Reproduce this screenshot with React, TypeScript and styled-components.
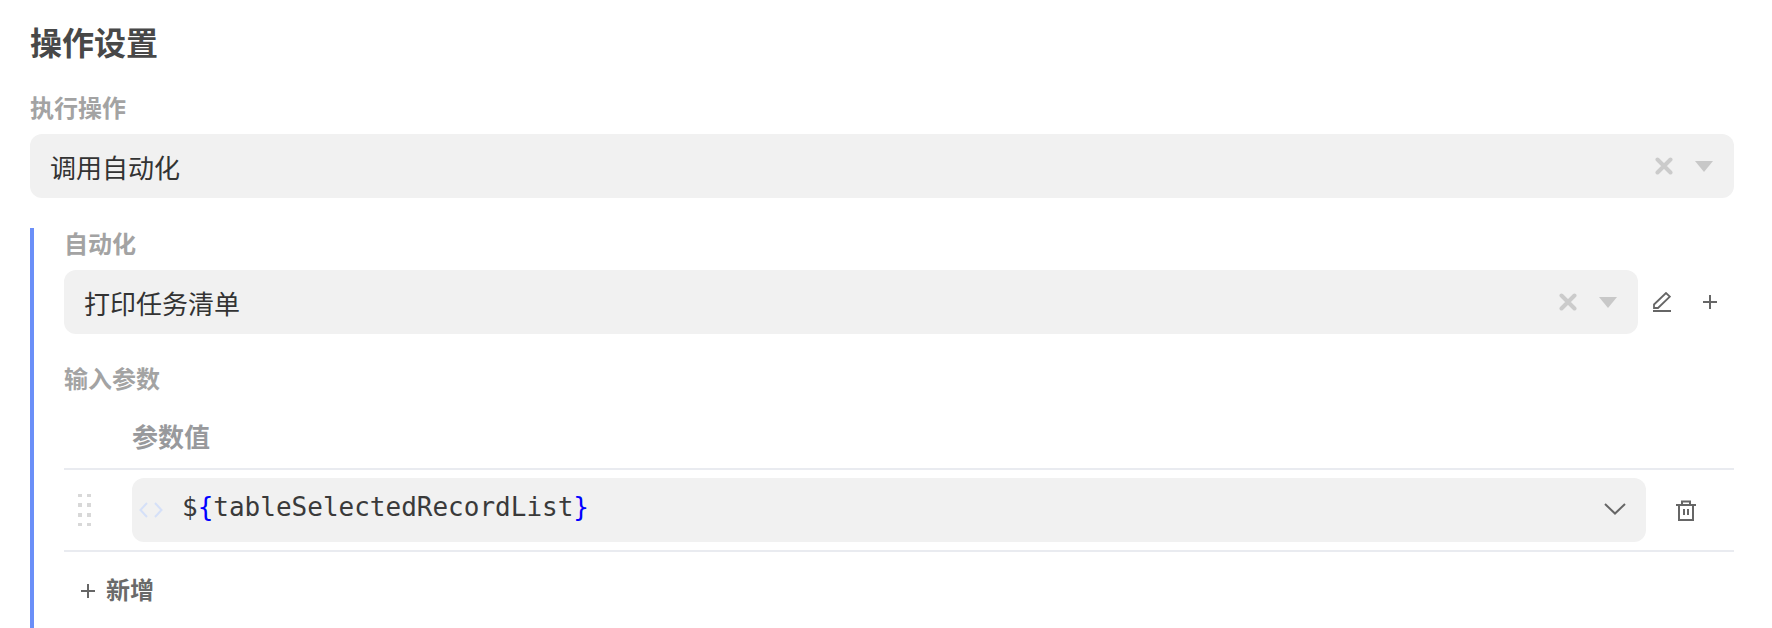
import React from "react";
import styled, { createGlobalStyle } from "styled-components";

const Global = createGlobalStyle`
  html, body { margin: 0; padding: 0; background: #fff; }
  body { font-family: "Liberation Sans", "Noto Sans CJK SC", sans-serif; overflow: hidden; }
`;

const Page = styled.div`
  width: 1772px;
  height: 628px;
  box-sizing: border-box;
  padding: 22px 38px 0 30px;
  overflow: hidden;
`;

const Title = styled.h1`
  margin: 0 0 26px;
  font-size: 32px;
  line-height: 44px;
  font-weight: 700;
  color: #484848;
`;

const Label = styled.div`
  font-size: 24px;
  line-height: 34px;
  font-weight: 700;
  color: #a3a3a3;
  margin-bottom: 8px;
`;

const Select = styled.div`
  flex: 1;
  min-width: 0;
  height: 64px;
  box-sizing: border-box;
  border-radius: 12px;
  background: #f1f1f1;
  display: flex;
  align-items: center;
  padding: 0 21px 0 20px;
  font-size: 26px;
  color: #333;
`;

const SelectText = styled.span`
  flex: 1;
`;

const ClearIcon = styled.svg`
  width: 18px;
  height: 18px;
  margin-right: 22px;
  display: block;
`;

const CaretIcon = styled.svg`
  width: 18px;
  height: 11px;
  display: block;
`;

const Branch = styled.section`
  margin-top: 30px;
  border-left: 4px solid #6b8ff8;
  padding-left: 30px;
  height: 400px;
`;

const SubField = styled.div`
  margin-bottom: 29px;
`;

const SelectRow = styled.div`
  display: flex;
  align-items: center;
`;

const IconSlot = styled.div`
  width: 48px;
  display: flex;
  justify-content: center;
  align-items: center;
  color: #666;
  flex: none;
`;

const TableHead = styled.div`
  padding: 0 0 9px 68px;
  height: 42px;
  margin-top: 20px;
  font-size: 26px;
  line-height: 42px;
  font-weight: 700;
  color: #98999c;
  border-bottom: 2px solid #e9ebf0;
`;

const TableRow = styled.div`
  display: flex;
  align-items: flex-start;
  height: 82px;
  padding-top: 8px;
  box-sizing: border-box;
  border-bottom: 2px solid #e9ebf0;
`;

const Handle = styled.div`
  width: 68px;
  flex: none;
  height: 64px;
  display: flex;
  align-items: center;
  padding-left: 14px;
  box-sizing: border-box;
`;

const HandleDots = styled.svg`
  display: block;
  width: 13px;
  height: 33px;
`;

const ValueInput = styled.div`
  width: 1514px;
  height: 64px;
  flex: none;
  box-sizing: border-box;
  border-radius: 12px;
  background: #f1f1f1;
  display: flex;
  align-items: center;
  padding: 0 20px 0 7px;
`;

const CodeIcon = styled.svg`
  width: 24px;
  height: 18px;
  flex: none;
  margin-right: 19px;
`;

const Code = styled.span`
  flex: 1;
  padding-bottom: 6px;
  font-family: "DejaVu Sans Mono", monospace;
  font-size: 26px;
  color: #3a3a3a;
  white-space: pre;
`;

const Brace = styled.span`
  color: #0000ff;
`;

const Trash = styled.div`
  width: 80px;
  height: 64px;
  flex: none;
  display: flex;
  justify-content: center;
  align-items: center;
  color: #666;
`;

const AddButton = styled.div`
  display: flex;
  align-items: center;
  gap: 11px;
  margin-top: 22px;
  padding-left: 17px;
  font-size: 24px;
  line-height: 34px;
  font-weight: 700;
  color: #6a6a6a;
`;

const Clear = () => (
  <ClearIcon viewBox="0 0 18 18">
    <path d="M2.5 2.5L15.5 15.5M15.5 2.5L2.5 15.5" stroke="#cbcbcb" strokeWidth="4" strokeLinecap="round" />
  </ClearIcon>
);

const Caret = () => (
  <CaretIcon viewBox="0 0 18 11">
    <path d="M0 0H18L9 11Z" fill="#c8c8c8" />
  </CaretIcon>
);

const Plus = () => (
  <svg width="14" height="14" viewBox="0 0 14 14" style={{ display: "block" }}>
    <path d="M7 0V14M0 7H14" stroke="#666" strokeWidth="2" />
  </svg>
);

export default function App() {
  return (
    <Page>
      <Global />
      <Title>操作设置</Title>
      <Label>执行操作</Label>
      <Select>
        <SelectText>调用自动化</SelectText>
        <Clear />
        <Caret />
      </Select>
      <Branch>
        <SubField>
          <Label>自动化</Label>
          <SelectRow>
            <Select>
              <SelectText>打印任务清单</SelectText>
              <Clear />
              <Caret />
            </Select>
            <IconSlot>
              <svg width="18" height="20" viewBox="0 0 18 20" fill="none" stroke="#666" style={{ display: "block" }}>
                <path d="M1 12.5L13 1L16.8 4.6L5 16H1Z" strokeWidth="1.8" />
                <path d="M0 19H18" strokeWidth="2" />
              </svg>
            </IconSlot>
            <IconSlot>
              <Plus />
            </IconSlot>
          </SelectRow>
        </SubField>
        <Label>输入参数</Label>
        <TableHead>参数值</TableHead>
        <TableRow>
          <Handle>
            <HandleDots viewBox="0 0 13 33" fill="#d8d8d8">
              <rect x="0" y="0" width="4" height="3" /><rect x="9" y="0" width="4" height="3" />
              <rect x="0" y="9" width="4" height="4" /><rect x="9" y="9" width="4" height="4" />
              <rect x="0" y="19" width="4" height="4" /><rect x="9" y="19" width="4" height="4" />
              <rect x="0" y="29" width="4" height="3" /><rect x="9" y="29" width="4" height="3" />
            </HandleDots>
          </Handle>
          <ValueInput>
            <CodeIcon viewBox="0 0 24 18" fill="none" stroke="#d5e0f8" strokeWidth="2">
              <path d="M8 2L1.5 9L8 16M16 2L22.5 9L16 16" />
            </CodeIcon>
            <Code>$<Brace>{"{"}</Brace>tableSelectedRecordList<Brace>{"}"}</Brace></Code>
            <svg width="22" height="12" viewBox="0 0 22 12" fill="none" stroke="#666" strokeWidth="2" style={{ display: "block", marginTop: "-2px" }}>
              <path d="M1 1L11 10.5L21 1" />
            </svg>
          </ValueInput>
          <Trash>
            <svg width="20" height="21" viewBox="0 0 20 21" fill="none" stroke="#666" strokeWidth="2" style={{ display: "block" }}>
              <path d="M0 5H20M3 5V20H17V5M6 5V1.5H14V5M8 9V15M12 9V15" />
            </svg>
          </Trash>
        </TableRow>
        <AddButton>
          <Plus />
          新增
        </AddButton>
      </Branch>
    </Page>
  );
}
